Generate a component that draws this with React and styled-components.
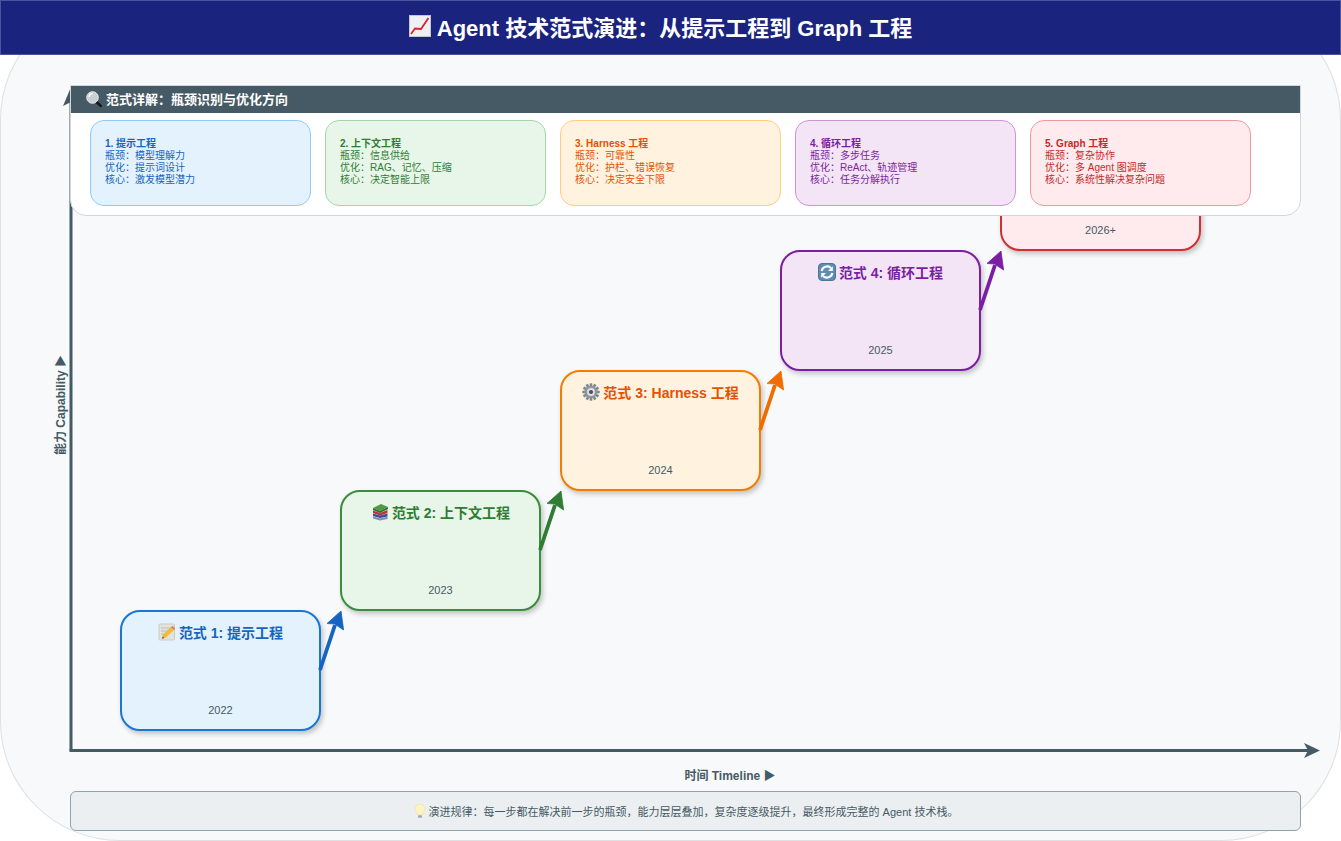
import React from 'react';
import styled, { createGlobalStyle } from 'styled-components';

const GlobalStyle = createGlobalStyle`
    html, body {
        margin: 0;
        padding: 0;
        background: #ffffff;
        font-family: "Liberation Sans", "Noto Sans CJK SC", sans-serif;
    }
`;

const Stage = styled.div`
    width: 1341px;
    height: 841px;
    box-sizing: border-box;
    display: flex;
    flex-direction: column;
    background: #f8f9fa;
    border-radius: 120px;
    box-shadow: inset 0 0 0 1px #e0e0e0;
`;

const Header = styled.header`
    height: 55px;
    box-sizing: border-box;
    display: flex;
    align-items: center;
    justify-content: center;
    gap: 6px;
    padding: 0 20px 4px 0;
    background: #1a237e;
    border: 1px solid #4a55a0;
    color: #ffffff;
    font-size: 22px;
    font-weight: 700;
`;

const Canvas = styled.div`
    position: relative;
    height: 711px;
`;

const Drawing = styled.svg`
    position: absolute;
    left: 0;
    top: 0;
    display: block;
`;

const YLabel = styled.div`
    position: absolute;
    left: 59px;
    top: 350px;
    transform: translate(-50%, -50%) rotate(-90deg);
    white-space: nowrap;
    color: #455a64;
    font-size: 12px;
    font-weight: 700;
`;

const Node = styled.div`
    position: absolute;
    left: ${props => 120 + props.$step * 220}px;
    top: ${props => 555 - props.$step * 120}px;
    width: 201px;
    height: 121px;
    box-sizing: border-box;
    display: flex;
    flex-direction: column;
    align-items: center;
    justify-content: space-between;
    padding: 10px 0 12px;
    background: ${props => props.$bg};
    border: 2px solid ${props => props.$line};
    border-radius: 20px;
    box-shadow: 2px 3px 5px rgba(0, 0, 0, 0.22);
`;

const NodeTitle = styled.div`
    display: flex;
    align-items: center;
    gap: 3px;
    height: 20px;
    color: ${props => props.$color};
    font-size: 14px;
    font-weight: 700;
    white-space: nowrap;
`;

const Year = styled.div`
    color: #455a64;
    font-size: 11px;
    line-height: 14px;
`;

const Panel = styled.section`
    position: absolute;
    left: 70px;
    top: 30px;
    width: 1231px;
    height: 131px;
    box-sizing: border-box;
    background: #ffffff;
    border: 1px solid #cfd8dc;
    border-radius: 0 0 16px 16px;
    overflow: hidden;
`;

const PanelHead = styled.div`
    height: 27px;
    box-sizing: border-box;
    display: flex;
    align-items: center;
    gap: 4px;
    padding: 0 0 2px 15px;
    background: #455a64;
    color: #ffffff;
    font-size: 13px;
    font-weight: 700;
`;

const CardRow = styled.div`
    display: flex;
    gap: 14px;
    padding: 7px 19px 0;
`;

const Card = styled.div`
    width: 221px;
    height: 86px;
    box-sizing: border-box;
    padding: 17px 14px 0;
    background: ${props => props.$bg};
    border: 1px solid ${props => props.$edge};
    border-radius: 14px;
    color: ${props => props.$color};
`;

const CardLine = styled.div`
    font-size: 10px;
    line-height: 12px;
    font-weight: ${props => props.$strong ? 700 : 400};
    white-space: nowrap;
`;

const XLabel = styled.div`
    height: 18px;
    box-sizing: border-box;
    display: flex;
    align-items: center;
    justify-content: center;
    color: #455a64;
    font-size: 12px;
    font-weight: 700;
    padding: 0 0 2px 119px;
`;

const Note = styled.div`
    height: 40px;
    box-sizing: border-box;
    margin: 7px 40px 0 70px;
    display: flex;
    align-items: center;
    justify-content: center;
    gap: 2px;
    padding-bottom: 1px;
    background: #eceff1;
    border: 1px solid #90a4ae;
    border-radius: 6px;
    color: #455a64;
    font-size: 11px;
`;

const ChartIcon = () => (
    <svg width="22" height="24" viewBox="0 0 22 24">
        <rect x="0.5" y="1.5" width="21" height="21" fill="#eef0f3" stroke="#c3c7cd" />
        <path d="M2 20 L6 14.5 L12 15 L19.5 4" fill="none" stroke="#d8262c" strokeWidth="1.8" />
    </svg>
);

const GlassIcon = () => (
    <svg width="16" height="16" viewBox="0 0 16 16">
        <path d="M9.5 10 L15 15.2" stroke="#17191c" strokeWidth="2.6" strokeLinecap="round" />
        <circle cx="6.5" cy="6.5" r="5.8" fill="#c9cfd4" stroke="#e4e7ea" />
        <path d="M3 6 A3.6 3.6 0 0 1 6.5 2.6" fill="none" stroke="#ffffff" strokeWidth="1.4" />
    </svg>
);

const MemoIcon = () => (
    <svg width="18" height="18" viewBox="0 0 18 18">
        <rect x="1" y="1" width="15.5" height="16" rx="1" fill="#e2e2de" stroke="#cbcbc6" />
        <path d="M3 5 H14 M3 8 H10 M3 11 H7" stroke="#bdbdb8" strokeWidth="1" />
        <path d="M5 11.5 L13 4 L16 7 L8 14.5 L4 15.8 Z" fill="#f3b93a" />
        <path d="M13 4 L16 7 L17 5.6 L14.6 3 Z" fill="#e8743a" />
        <path d="M4 15.8 L4.7 13.4 L6.4 15 Z" fill="#5a4a3a" />
    </svg>
);

const BooksIcon = () => (
    <svg width="18" height="18" viewBox="0 0 18 18">
        <path d="M2 5 L10 1 L17 4 L9 8 Z" fill="#4f9a46" />
        <path d="M2 5 L9 8 L17 4 V6 L9 10 L2 7 Z" fill="#2c6e2c" />
        <path d="M2 7.5 L9 10 L16.5 7 V10 L9 12.5 L2 10 Z" fill="#c0303a" />
        <path d="M2 10.5 L9 12.5 L16.5 10.5 V13.5 L9 15 L2 13 Z" fill="#3a4f9a" />
        <path d="M2 13.5 L9 15.2 L16.5 13.8 V16 L9 17.5 L2 15.5 Z" fill="#8d88b8" />
    </svg>
);

const GearIcon = () => (
    <svg width="18" height="18" viewBox="0 0 18 18">
        {[...Array(12)].map((_, i) => (
            <rect key={i} x="7.7" y="0.3" width="2.6" height="4" fill="#7d858e" transform={`rotate(${i * 30} 9 9)`} />
        ))}
        <circle cx="9" cy="9" r="6.4" fill="#8e969f" />
        <circle cx="9" cy="9" r="3.9" fill="#dfe2e5" />
        <circle cx="9" cy="9" r="2.1" fill="#4a5058" />
    </svg>
);

const CycleIcon = () => (
    <svg width="18" height="18" viewBox="0 0 18 18">
        <rect x="0.5" y="0.5" width="17" height="17" rx="3.5" fill="#5f8db2" stroke="#4b7598" />
        <path d="M3.6 8 A5.6 5.6 0 0 1 13 5" fill="none" stroke="#ffffff" strokeWidth="2" />
        <path d="M14.8 3.2 V8 H10 Z" fill="#ffffff" />
        <path d="M14.4 10 A5.6 5.6 0 0 1 5 13" fill="none" stroke="#ffffff" strokeWidth="2" />
        <path d="M3.2 14.8 V10 H8 Z" fill="#ffffff" />
    </svg>
);

const BulbIcon = () => (
    <svg width="14" height="16" viewBox="0 0 14 16">
        <path d="M7 1 A5 5 0 0 1 10 10 L9.4 12 H4.6 L4 10 A5 5 0 0 1 7 1 Z" fill="#fdf3c4" stroke="#ecdf9e" strokeWidth="0.6" />
        <rect x="5" y="12.2" width="4" height="2.6" rx="0.8" fill="#a4aab0" />
    </svg>
);

const arrowTips = [
    { x: 341, y: 611, color: '#1565c0' },
    { x: 561, y: 491, color: '#2e7d32' },
    { x: 781, y: 371, color: '#ef6c00' },
    { x: 1001, y: 251, color: '#7b1fa2' },
];

const stages = [
    { icon: <MemoIcon />, title: '范式 1: 提示工程', year: '2022', bg: '#e3f2fd', line: '#1976d2', color: '#1565c0' },
    { icon: <BooksIcon />, title: '范式 2: 上下文工程', year: '2023', bg: '#e8f5e9', line: '#388e3c', color: '#2e7d32' },
    { icon: <GearIcon />, title: '范式 3: Harness 工程', year: '2024', bg: '#fff3e0', line: '#f57c00', color: '#e65100' },
    { icon: <CycleIcon />, title: '范式 4: 循环工程', year: '2025', bg: '#f3e5f5', line: '#7b1fa2', color: '#7b1fa2' },
    { icon: null, title: '范式 5: Graph 工程', year: '2026+', bg: '#ffebee', line: '#d32f2f', color: '#c62828' },
];

const cards = [
    { title: '1. 提示工程', lines: ['瓶颈：模型理解力', '优化：提示词设计', '核心：激发模型潜力'], bg: '#e3f2fd', edge: '#90caf9', color: '#1565c0' },
    { title: '2. 上下文工程', lines: ['瓶颈：信息供给', '优化：RAG、记忆、压缩', '核心：决定智能上限'], bg: '#e8f5e9', edge: '#a5d6a7', color: '#2e7d32' },
    { title: '3. Harness 工程', lines: ['瓶颈：可靠性', '优化：护栏、错误恢复', '核心：决定安全下限'], bg: '#fff3e0', edge: '#ffcc80', color: '#e65100' },
    { title: '4. 循环工程', lines: ['瓶颈：多步任务', '优化：ReAct、轨迹管理', '核心：任务分解执行'], bg: '#f3e5f5', edge: '#ce93d8', color: '#7b1fa2' },
    { title: '5. Graph 工程', lines: ['瓶颈：复杂协作', '优化：多 Agent 图调度', '核心：系统性解决复杂问题'], bg: '#ffebee', edge: '#ef9a9a', color: '#c62828' },
];

const Axes = () => (
    <Drawing width="1341" height="711" viewBox="0 55 1341 711">
        <path d="M71 750.5 V100" stroke="#455a64" strokeWidth="3" fill="none" />
        <path d="M71 87 L79 106 L71 102 L63 106 Z" fill="#455a64" />
        <path d="M69.5 750.5 H1310" stroke="#455a64" strokeWidth="3" fill="none" />
        <path d="M1320 750.5 L1304 743 L1308 750.5 L1304 758 Z" fill="#455a64" />
    </Drawing>
);

const Arrows = () => (
    <Drawing width="1341" height="711" viewBox="0 55 1341 711">
        {arrowTips.map(tip => (
            <g key={tip.x} transform={`translate(${tip.x} ${tip.y})`} fill={tip.color}>
                <path d="M-21 59 L-6 14" stroke={tip.color} strokeWidth="3.8" fill="none" />
                <path d="M0 0 L-14 12.5 L-6.5 13 L2.6 19 Z" stroke={tip.color} strokeWidth="0.8" />
            </g>
        ))}
    </Drawing>
);

export default function App() {
    return (
        <>
            <GlobalStyle />
            <Stage>
                <Header>
                    <ChartIcon />
                    <span>Agent 技术范式演进：从提示工程到 Graph 工程</span>
                </Header>
                <Canvas>
                    <Axes />
                    <YLabel>能力 Capability ▶</YLabel>
                    {stages.map((stage, i) => (
                        <Node key={stage.year} $step={i} $bg={stage.bg} $line={stage.line}>
                            <NodeTitle $color={stage.color}>
                                {stage.icon}
                                <span>{stage.title}</span>
                            </NodeTitle>
                            <Year>{stage.year}</Year>
                        </Node>
                    ))}
                    <Arrows />
                    <Panel>
                        <PanelHead>
                            <GlassIcon />
                            <span>范式详解：瓶颈识别与优化方向</span>
                        </PanelHead>
                        <CardRow>
                            {cards.map(card => (
                                <Card key={card.title} $bg={card.bg} $edge={card.edge} $color={card.color}>
                                    <CardLine $strong>{card.title}</CardLine>
                                    {card.lines.map(line => (
                                        <CardLine key={line}>{line}</CardLine>
                                    ))}
                                </Card>
                            ))}
                        </CardRow>
                    </Panel>
                </Canvas>
                <XLabel>时间 Timeline ▶</XLabel>
                <Note>
                    <BulbIcon />
                    <span>演进规律：每一步都在解决前一步的瓶颈，能力层层叠加，复杂度逐级提升，最终形成完整的 Agent 技术栈。</span>
                </Note>
            </Stage>
        </>
    );
}
